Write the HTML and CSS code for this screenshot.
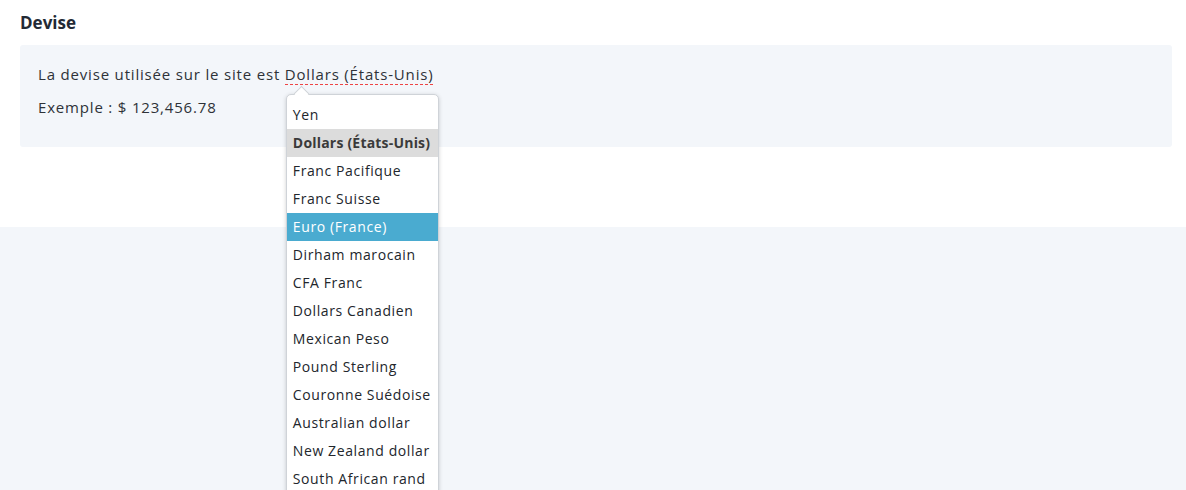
FILE: index.html
```html
<!DOCTYPE html>
<html lang="fr">
<head>
<meta charset="utf-8">
<link rel="stylesheet" href="styles.css">
</head>
<body>
<div class="top">
  <h2 class="title">Devise</h2>
  <div class="card">
    <div class="line">La devise utilisée sur le site est <span class="picker">Dollars (États-Unis)<span class="menu">
      <span class="item">Yen</span>
      <span class="item selected">Dollars (États-Unis)</span>
      <span class="item">Franc Pacifique</span>
      <span class="item">Franc Suisse</span>
      <span class="item hover">Euro (France)</span>
      <span class="item">Dirham marocain</span>
      <span class="item">CFA Franc</span>
      <span class="item">Dollars Canadien</span>
      <span class="item">Mexican Peso</span>
      <span class="item">Pound Sterling</span>
      <span class="item">Couronne Suédoise</span>
      <span class="item">Australian dollar</span>
      <span class="item">New Zealand dollar</span>
      <span class="item">South African rand</span>
    </span></span></div>
    <div class="line">Exemple : $ 123,456.78</div>
  </div>
</div>
<div class="bottom"></div>
</body>
</html>
```
FILE: styles.css
```css
html, body { margin: 0; padding: 0; }
body {
  font-family: "Open Sans", "Liberation Sans", sans-serif;
  color: #2b2f36;
  background: #fff;
  overflow: hidden;
  height: 490px;
}
.top {
  height: 227px;
  padding: 0 14px 0 20px;
  box-sizing: border-box;
}
.title {
  margin: 0;
  padding-top: 12px;
  font-size: 17px;
  font-weight: 700;
  line-height: 22px;
  color: #232a35;
  height: 33px;
}
.card {
  background: #f3f6fa;
  border-radius: 3px;
  padding: 18px 18px 0;
  height: 102px;
  box-sizing: border-box;
}
.line {
  margin: 0 0 11px;
  font-size: 15px;
  line-height: 22px;
  letter-spacing: 0.82px;
  color: #2e3238;
}
.picker {
  position: relative;
  display: inline-block;
  line-height: 20px;
  padding-bottom: 1px;
  background-image: linear-gradient(to right, #ee4444 60%, transparent 60%);
  background-size: 5px 1px;
  background-repeat: repeat-x;
  background-position: 0 100%;
}
.menu {
  position: absolute;
  left: 1px;
  top: 30px;
  width: 151px;
  padding: 6px 0 40px;
  background: #fff;
  border: 1px solid #cfd3d8;
  border-radius: 5px;
  box-shadow: 0 1px 4px rgba(0,0,0,0.18);
  z-index: 2;
  letter-spacing: 0.6px;
}
.menu::before {
  content: "";
  position: absolute;
  left: 9px;
  top: -7px;
  width: 10px;
  height: 10px;
  background: #fff;
  border-left: 1px solid #cfd3d8;
  border-top: 1px solid #cfd3d8;
  transform: rotate(45deg);
}
.item {
  display: block;
  position: relative;
  height: 28px;
  line-height: 28px;
  padding-left: 6px;
  font-size: 14px;
  color: #22262c;
  white-space: nowrap;
}
.item.selected {
  background: #dcdcdc;
  font-weight: 700;
  color: #3a3a3a;
  letter-spacing: 0.2px;
}
.item.hover {
  background: #4aabd0;
  color: #fff;
}
.bottom {
  background: #f3f6fa;
  height: 263px;
}
```
